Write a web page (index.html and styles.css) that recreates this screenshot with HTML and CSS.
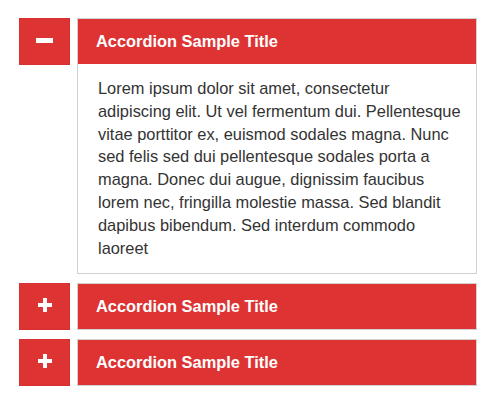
FILE: index.html
```html
<!DOCTYPE html>
<html lang="en">
<head>
    <meta charset="UTF-8">
    <meta name="viewport" content="width=device-width, initial-scale=1.0">
    <title>Accordion</title>
    <link rel="stylesheet" href="styles.css">
</head>
<body>
    <div class="accordion">
        <!-- open item -->
        <div class="acc-item open">
            <div class="acc-toggle">
                <svg width="17" height="5" viewBox="0 0 17 5"><rect width="17" height="5" fill="#fff"/></svg>
            </div>
            <div class="acc-panel">
                <div class="acc-title">Accordion Sample Title</div>
                <div class="acc-body">
                    Lorem ipsum dolor sit amet, consectetur adipiscing elit. Ut vel fermentum dui. Pellentesque vitae porttitor ex, euismod sodales magna. Nunc sed felis sed dui pellentesque sodales porta a magna. Donec dui augue, dignissim faucibus lorem nec, fringilla molestie massa. Sed blandit dapibus bibendum. Sed interdum commodo laoreet
                </div>
            </div>
        </div>

        <div class="acc-item">
            <div class="acc-toggle">
                <svg width="14" height="14" viewBox="0 0 14 14"><rect x="5" y="0" width="4" height="14" fill="#fff"/><rect x="0" y="5" width="14" height="4" fill="#fff"/></svg>
            </div>
            <div class="acc-panel">
                <div class="acc-title">Accordion Sample Title</div>
            </div>
        </div>

        <div class="acc-item">
            <div class="acc-toggle">
                <svg width="14" height="14" viewBox="0 0 14 14"><rect x="5" y="0" width="4" height="14" fill="#fff"/><rect x="0" y="5" width="14" height="4" fill="#fff"/></svg>
            </div>
            <div class="acc-panel">
                <div class="acc-title">Accordion Sample Title</div>
            </div>
        </div>
    </div>
</body>
</html>
```

FILE: styles.css
```css
body {
    margin: 0;
    font-family: "Liberation Sans", Arial, sans-serif;
    background: #fff;
}
.accordion {
    padding: 18px 0 0 19px;
}
.acc-item {
    display: flex;
    align-items: flex-start;
    gap: 7px;
    margin-bottom: 9px;
}
.acc-toggle {
    width: 51px;
    height: 47px;
    box-sizing: border-box;
    background-color: #dd3333;
    border: 1px solid #d63030;
    display: flex;
    align-items: center;
    justify-content: center;
    padding-bottom: 3px;
}
.acc-panel {
    width: 400px;
    box-sizing: border-box;
    border: 1px solid #d2d2d2;
}
.acc-title {
    height: 45px;
    line-height: 45px;
    background-color: #dd3333;
    color: #fff;
    font-weight: bold;
    font-size: 16.4px;
    padding-left: 18px;
}
.acc-body {
    padding: 13px 12px 14px 20px;
    font-size: 16.4px;
    line-height: 22.8px;
    color: #333;
}
```
